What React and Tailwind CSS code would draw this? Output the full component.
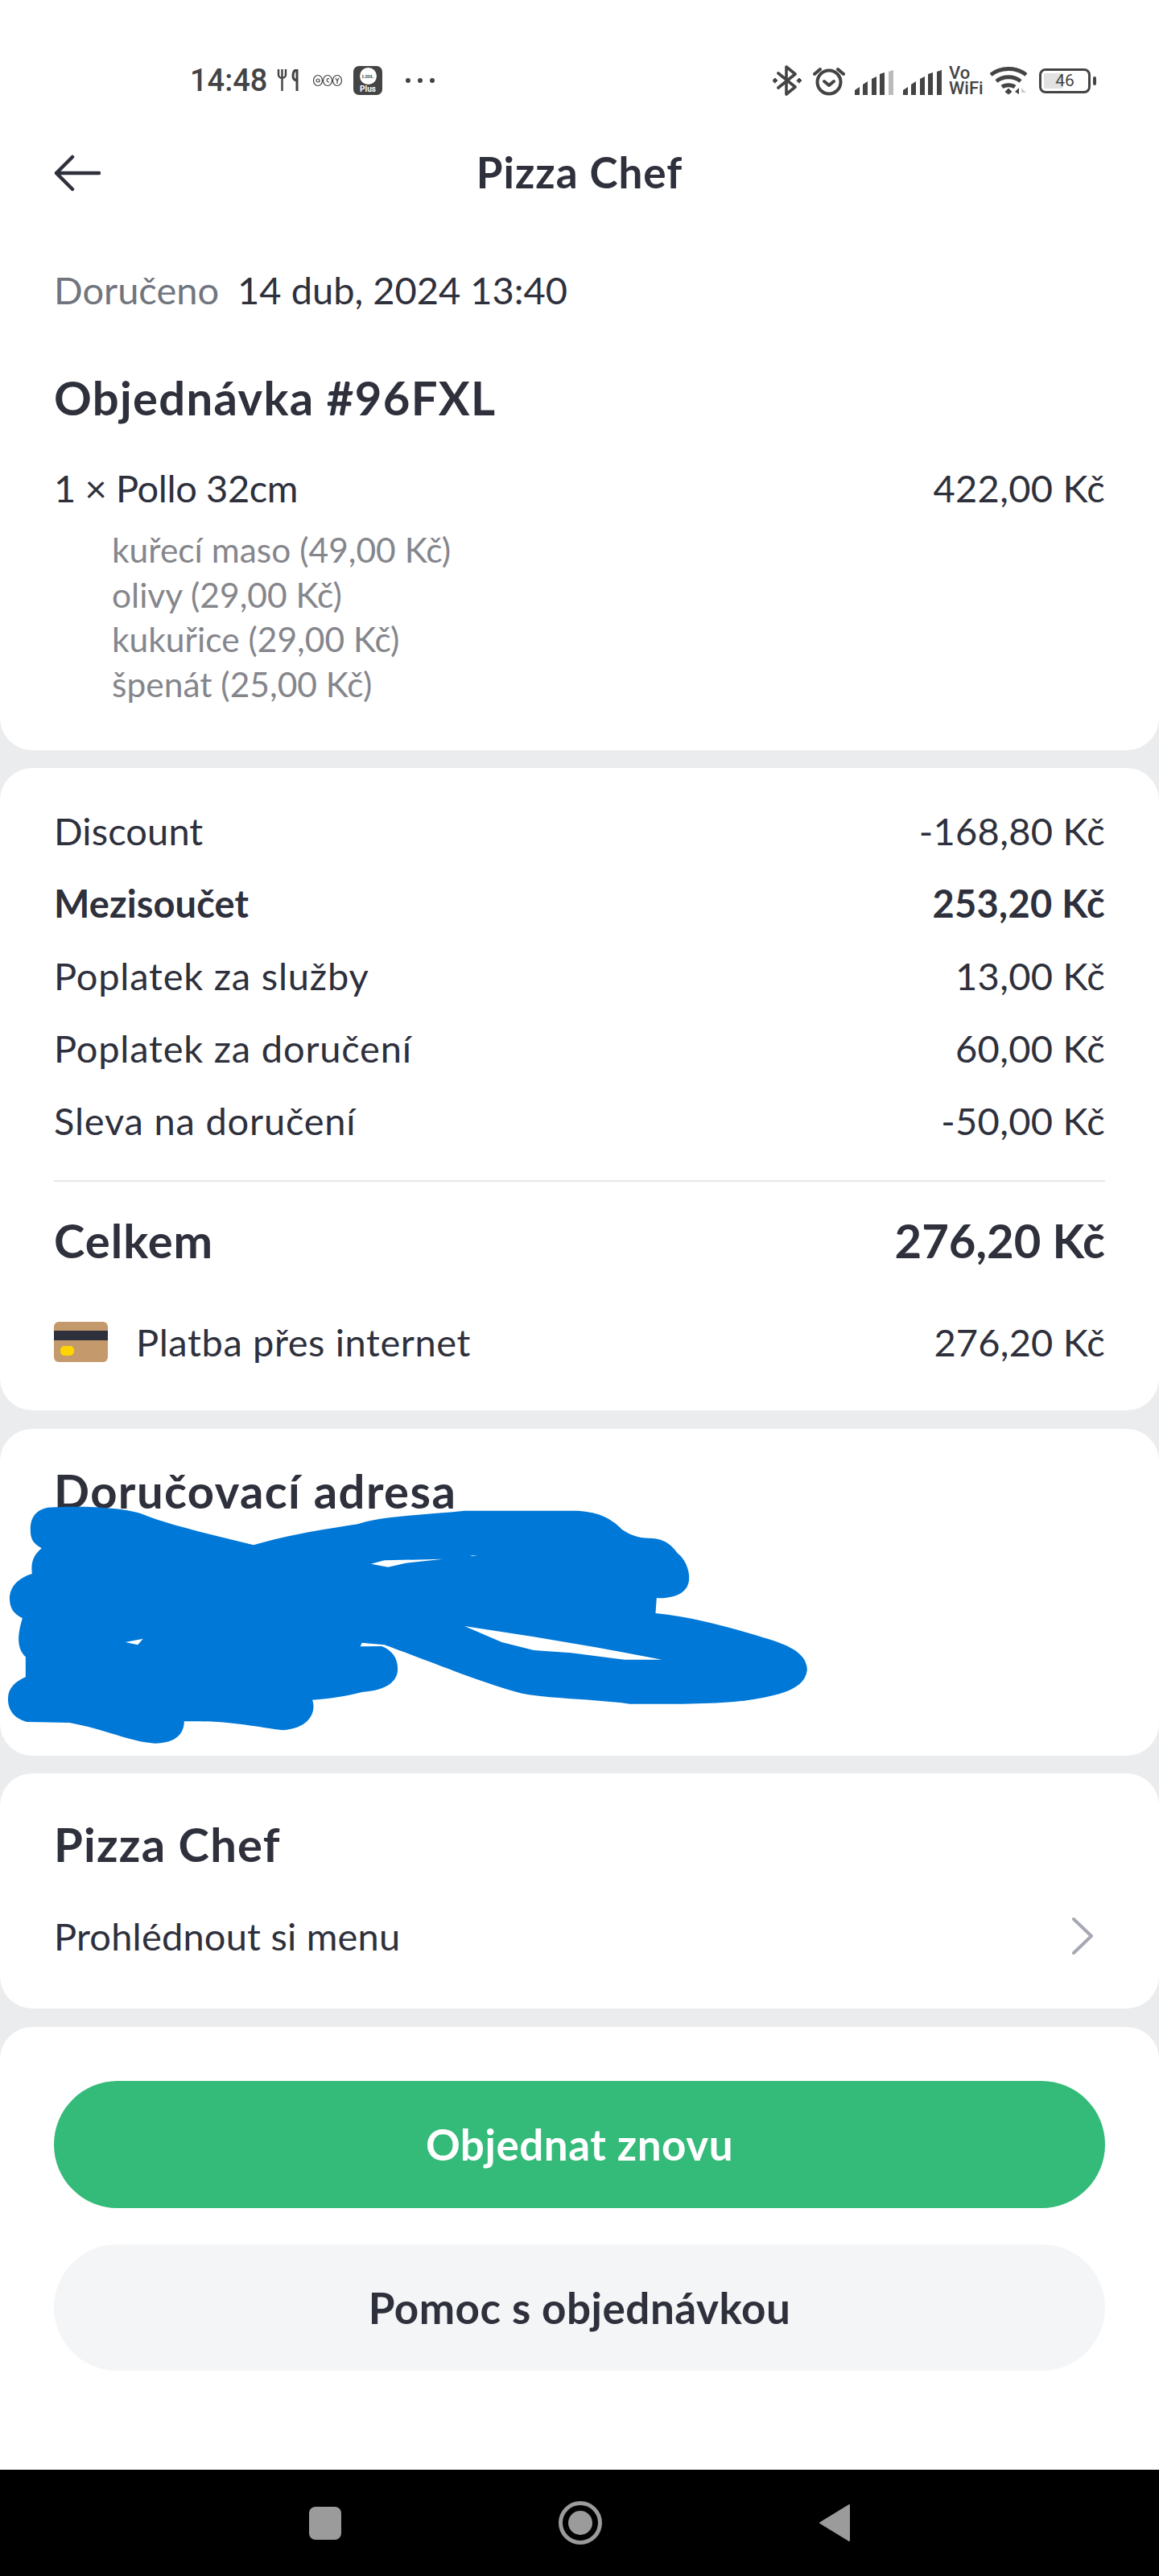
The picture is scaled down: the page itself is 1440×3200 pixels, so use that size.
const font = { fontFamily: "Lato, 'Liberation Sans', sans-serif" };

function Bluetooth() {
  return (
    <svg width="36" height="38" viewBox="0 0 36 38" fill="none" stroke="#444" strokeWidth="3.6" strokeLinejoin="round" strokeLinecap="round">
      <path d="M7 10 L28 27 L17 36 V2 L28 11 L7 28" />
      <path d="M0 19 L3 16 L6 19 L3 22 Z M30 19 L33 16 L36 19 L33 22 Z" fill="#444" strokeWidth="1" />
    </svg>
  );
}

function Alarm() {
  return (
    <svg width="40" height="38" viewBox="0 0 40 38" fill="none" stroke="#444" strokeWidth="4" strokeLinecap="round" strokeLinejoin="round">
      <circle cx="20" cy="21" r="14.5" />
      <path d="M14 20 L20 25 L26 20" />
      <path d="M2 11 L9 5 M38 11 L31 5" />
    </svg>
  );
}

function Signal({ last = "#444" }) {
  return (
    <svg width="48" height="32" viewBox="0 0 48 32">
      <path d="M0 25 L6 21 V31 H0 Z" fill="#444" />
      <path d="M10 18 L16 14 V31 H10 Z" fill="#444" />
      <path d="M21 11 L27 8 V31 H21 Z" fill="#444" />
      <path d="M31 5 L37 3 V31 H31 Z" fill="#444" />
      <path d="M42 2 L48 0 V31 H42 Z" fill={last} />
    </svg>
  );
}

function Wifi() {
  return (
    <svg width="46" height="36" viewBox="0 0 46 36" fill="none" stroke="#444" strokeWidth="4.8">
      <path d="M1 11 C13 1 33 1 45 11" />
      <path d="M8 19 C16 12 30 12 38 19" />
      <path d="M15 26 C19 23 27 23 31 26" />
      <path d="M19 32 L23 28 L27 32 L23 35 Z" fill="#444" strokeWidth="1" />
      <path d="M31 32 L36 27 V35 Z" fill="#444" stroke="none" />
      <path d="M39 27 L45 33 H39 Z" fill="#ccc" stroke="none" />
    </svg>
  );
}

function StatusBar() {
  return (
    <div className="h-[160px] pl-[236px] pr-[78px] pt-[78px] flex items-start justify-between" style={{ fontFamily: "Roboto, sans-serif" }}>
      <div className="flex items-center h-[44px]">
        <span className="text-[38px] leading-none font-medium text-[#444] w-[108px]">14:48</span>
        <svg width="27" height="28" viewBox="0 0 27 28" fill="none" stroke="#444" strokeWidth="2.4">
          <path d="M2 0 V7 C2 12 11 12 11 7 V0 M6.5 0 V27" />
          <path d="M25 0 C19 2 18 13 24.5 14 M25 0 V27" strokeWidth="3" />
        </svg>
        <svg className="ml-[18px]" width="36" height="16" viewBox="0 0 36 16" fill="none" stroke="#444" strokeWidth="1.2">
          <ellipse cx="6" cy="8" rx="5.5" ry="6.5" />
          <ellipse cx="18" cy="8" rx="5.5" ry="6.5" />
          <ellipse cx="30" cy="8" rx="5.5" ry="6.5" />
          <circle cx="6" cy="8" r="2" />
          <path d="M20 6 C17 4 15.5 10 20 10" />
          <path d="M28 5 L30 8.5 L32 5 M30 8.5 V12" />
        </svg>
        <div className="ml-[14px] w-[36px] h-[36px] rounded-[7px] bg-[#444] flex flex-col items-center pt-[2px]">
          <div className="w-[21px] h-[21px] rounded-full bg-white flex items-center justify-center text-[6px] font-bold text-[#444] leading-none" style={{ fontFamily: "'Liberation Serif', serif" }}>LIDL</div>
          <span className="text-[10px] font-bold leading-[11px] text-white">Plus</span>
        </div>
        <div className="ml-[29px] flex gap-[9px]">
          <div className="w-[6px] h-[6px] rounded-full bg-[#444]" />
          <div className="w-[6px] h-[6px] rounded-full bg-[#444]" />
          <div className="w-[6px] h-[6px] rounded-full bg-[#444]" />
        </div>
      </div>
      <div className="flex items-center h-[44px] -ml-[4px]">
        <Bluetooth />
        <div className="ml-[14px]"><Alarm /></div>
        <div className="ml-[12px] mt-[6px]"><Signal last="#bbb" /></div>
        <div className="ml-[12px] mt-[6px]"><Signal /></div>
        <div className="ml-[9px] w-[42px] flex flex-col text-[#444] font-medium text-[22px] leading-[19px]">
          <span>Vo</span>
          <span>WiFi</span>
        </div>
        <div className="ml-[9px]"><Wifi /></div>
        <div className="ml-[15px] w-[64px] h-[31px] border-[3px] border-[#444] rounded-[8px] p-[3px] relative">
          <div className="h-full w-[46%] bg-[#e2e2e2] rounded-[2px]" />
          <span className="absolute inset-0 flex items-center justify-center text-[21px] leading-none text-[#444]">46</span>
        </div>
        <div className="ml-[3px] w-[4px] h-[11px] rounded-[2px] bg-[#444]" />
      </div>
    </div>
  );
}

function Row({ label, value, bold, tight }) {
  return (
    <div className={`h-[90px] flex items-center justify-between text-[47px] ${bold ? "font-bold" : ""}`}>
      <span className={bold || tight ? "tracking-[0.1px]" : "tracking-[0.8px]"}>{label}</span>
      <span className="tracking-[0.3px]">{value}</span>
    </div>
  );
}

function Scribble() {
  return (
    <svg className="absolute left-0 top-[-15px]" width="1040" height="440" viewBox="0 0 1568 1320" preserveAspectRatio="none">
      <path
        fill="#0078d7"
        fillRule="evenodd"
        d="M90 338 C150 332 230 335 270 365 C320 405 400 440 475 478 C540 440 620 415 670 400 C710 370 800 365 870 350 L1080 350 C1130 355 1150 390 1165 420 C1180 440 1195 452 1215 452 C1250 452 1262 490 1270 510 C1290 540 1300 620 1280 650 C1270 670 1245 678 1230 675 L1228 732 C1290 745 1340 770 1400 805 C1450 835 1510 860 1512 940 C1510 1000 1480 1030 1420 1050 C1370 1070 1280 1072 1180 1070 C1100 1050 1020 1050 975 1030 C900 990 830 930 720 850 L678 842 L675 856 L715 855 C735 870 745 900 745 940 C745 985 725 1020 680 1025 C650 1040 620 1050 585 1055 C592 1090 585 1160 530 1168 C490 1160 430 1130 345 1135 C345 1180 330 1217 290 1217 C240 1210 200 1165 130 1140 L50 1137 C20 1120 15 1080 15 1050 C15 1010 30 985 48 970 L48 895 C30 860 33 810 42 750 C20 730 18 700 18 670 C20 630 35 600 60 585 C58 550 60 520 78 490 C60 470 57 450 57 420 C57 370 70 345 90 338 Z
           M695 548 L720 535 L830 530 L760 545 L727 560 Z
           M880 518 L895 515 L885 520 Z
           M235 840 L268 827 L258 850 Z
           M870 780 L1000 820 L1120 860 L1240 905 L1170 905 L1070 880 L1000 870 L940 840 Z"
      />
    </svg>
  );
}

export default function App() {
  return (
    <div className="w-[1440px] h-[3200px] bg-[#ebecee] text-[#2e303c] flex flex-col overflow-hidden" style={font}>
      <div className="bg-white h-[932px] rounded-b-[40px] px-[67px]">
        <div className="-mx-[67px]"><StatusBar /></div>
        {/* Header */}
        <div className="h-[110px] flex items-center justify-between">
          <svg width="58" height="46" viewBox="0 0 58 46" fill="none" stroke="#2e303c" strokeWidth="4.5" strokeLinecap="round" strokeLinejoin="round">
            <path d="M56 23 H3 M23 3 L3 23 L23 43" />
          </svg>
          <span className="text-[53px] tracking-[1px] font-bold -ml-[58px] -mt-[2px]">Pizza Chef</span>
          <span />
        </div>
        <div className="mt-[60px] h-[60px] flex items-center text-[47px]">
          <span className="text-[#71757e]">Doručeno</span>
          <span className="ml-[23px]">14 dub, 2024 13:40</span>
        </div>
        <div className="mt-[68px] h-[70px] flex items-center text-[58px] tracking-[1.3px] font-bold">Objednávka #96FXL</div>
        <div className="mt-[50px] h-[56px] flex items-center justify-between text-[47px] tracking-[0.3px]">
          <span className="tracking-[-0.4px]">1 × Pollo 32cm</span>
          <span>422,00 Kč</span>
        </div>
        <div className="mt-[21px] pl-[72px] text-[42.5px] leading-[55.5px] text-[#85868c]">
          <div>kuřecí maso (49,00 Kč)</div>
          <div>olivy (29,00 Kč)</div>
          <div>kukuřice (29,00 Kč)</div>
          <div>špenát (25,00 Kč)</div>
        </div>
      </div>

      <div className="bg-white mt-[22px] h-[798px] rounded-[40px] px-[67px] pt-[33px]">
        <Row label="Discount" value="-168,80 Kč" tight />
        <Row label="Mezisoučet" value="253,20 Kč" bold />
        <Row label="Poplatek za služby" value="13,00 Kč" />
        <Row label="Poplatek za doručení" value="60,00 Kč" />
        <Row label="Sleva na doručení" value="-50,00 Kč" />
        <div className="mt-[29px] h-[2px] bg-[#e6e7e9]" />
        <div className="mt-[36px] h-[72px] flex items-center justify-between text-[58px] font-bold">
          <span className="tracking-[1px]">Celkem</span>
          <span>276,20 Kč</span>
        </div>
        <div className="mt-[61px] h-[60px] flex items-center justify-between text-[47px]">
          <div className="flex items-center">
            <div className="w-[67px] h-[50px] rounded-[6px] bg-[#c49a6c] pt-[11px] pl-[8px]">
              <div className="-ml-[8px] h-[12px] bg-[#2e303c]" />
              <div className="mt-[7px] w-[17px] h-[12px] rounded-[5px] bg-[#ffd400]" />
            </div>
            <span className="ml-[35px] tracking-[0.6px]">Platba přes internet</span>
          </div>
          <span className="tracking-[0.2px]">276,20 Kč</span>
        </div>
      </div>

      <div className="bg-white mt-[23px] h-[406px] rounded-[40px] px-[67px] pt-[45px] relative">
        <div className="text-[58px] tracking-[1.4px] font-bold leading-[64px]">Doručovací adresa</div>
        <Scribble />
      </div>

      <div className="bg-white mt-[22px] h-[292px] rounded-[40px] px-[67px] pt-[55px]">
        <div className="text-[58px] tracking-[1.2px] font-bold leading-[66px]">Pizza Chef</div>
        <div className="mt-[53px] h-[56px] flex items-center justify-between text-[47px] tracking-[0.2px]">
          <span>Prohlédnout si menu</span>
          <svg className="mr-[15px]" width="26" height="46" viewBox="0 0 26 46" fill="none" stroke="#a5a9b3" strokeWidth="4" strokeLinecap="round" strokeLinejoin="round">
            <path d="M2 2 L24 23 L2 44" />
          </svg>
        </div>
      </div>

      <div className="bg-white mt-[23px] h-[550px] rounded-t-[40px] px-[67px] pt-[67px] flex flex-col gap-[45px]">
        <button className="h-[158px] rounded-full bg-[#34ba79] text-white text-[53px] tracking-[0.5px] font-bold">Objednat znovu</button>
        <button className="h-[157px] rounded-full bg-[#f4f5f7] text-[53px] tracking-[0.5px] font-bold">Pomoc s objednávkou</button>
      </div>

      {/* Navigation bar */}
      <div className="bg-black flex-1 px-[384px] flex items-center justify-between">
        <div className="w-[40px] h-[41px] rounded-[8px] bg-[#9b9b9b]" />
        <div className="w-[54px] h-[54px] rounded-full border-[5px] border-[#9b9b9b] flex items-center justify-center">
          <div className="w-[30px] h-[30px] rounded-full bg-[#9b9b9b]" />
        </div>
        <svg width="38" height="46" viewBox="0 0 38 46" fill="#9b9b9b" stroke="#9b9b9b" strokeWidth="2" strokeLinejoin="round">
          <path d="M37 1 V45 L1 23 Z" />
        </svg>
      </div>
    </div>
  );
}
